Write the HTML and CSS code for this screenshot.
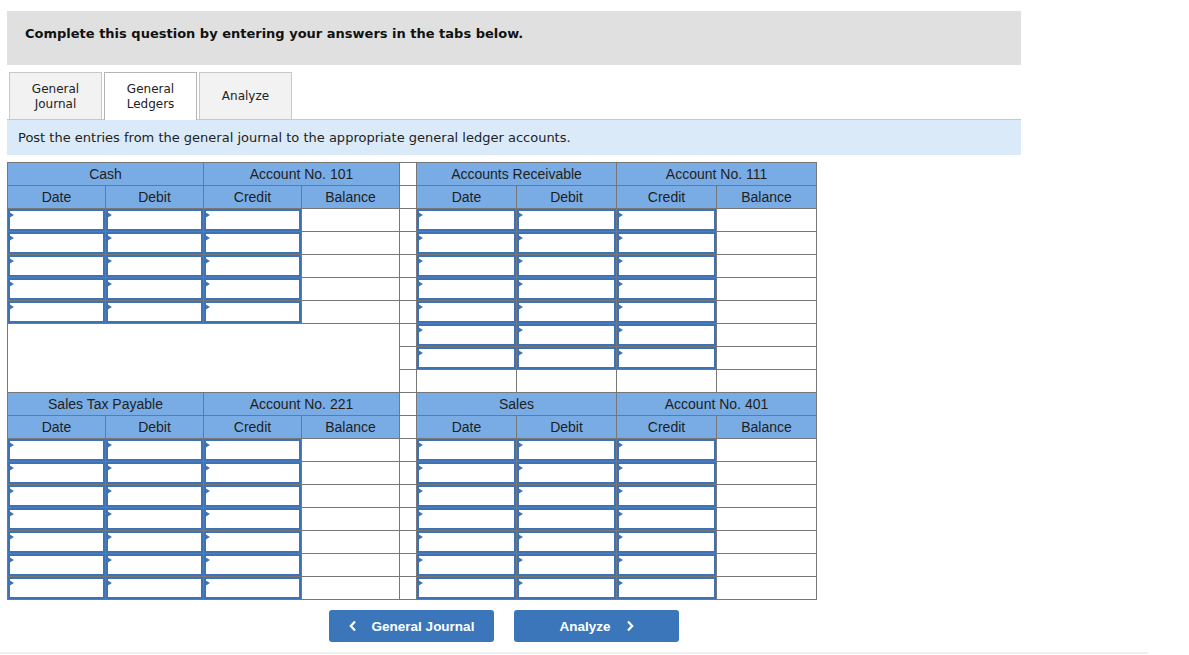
FILE: index.html
```html
<!DOCTYPE html>
<html>
<head>
<meta charset="utf-8">
<link rel="stylesheet" href="styles.css">
</head>
<body>
<div class="page">
  <div class="banner">Complete this question by entering your answers in the tabs below.</div>
  <div class="tabs">
    <div class="tab">General<br>Journal</div>
    <div class="tab active">General<br>Ledgers</div>
    <div class="tab">Analyze</div>
  </div>
  <div class="instr">Post the entries from the general journal to the appropriate general ledger accounts.</div>

  <table class="ledger">
    <colgroup>
      <col class="cl"><col class="cl"><col class="cl"><col class="cl">
      <col class="csp">
      <col class="cr"><col class="cr"><col class="cr"><col class="cr">
    </colgroup>
    <tr>
      <th colspan="2">Cash</th><th colspan="2">Account No. 101</th><td class="sp"></td>
      <th colspan="2">Accounts Receivable</th><th colspan="2">Account No. 111</th>
    </tr>
    <tr>
      <th>Date</th><th>Debit</th><th>Credit</th><th>Balance</th><td class="sp"></td>
      <th>Date</th><th>Debit</th><th>Credit</th><th>Balance</th>
    </tr>
    <tr><td><div class="box"></div></td><td><div class="box"></div></td><td><div class="box"></div></td><td></td><td class="sp"></td><td><div class="box"></div></td><td><div class="box"></div></td><td><div class="box"></div></td><td></td></tr>
    <tr><td><div class="box"></div></td><td><div class="box"></div></td><td><div class="box"></div></td><td></td><td class="sp"></td><td><div class="box"></div></td><td><div class="box"></div></td><td><div class="box"></div></td><td></td></tr>
    <tr><td><div class="box"></div></td><td><div class="box"></div></td><td><div class="box"></div></td><td></td><td class="sp"></td><td><div class="box"></div></td><td><div class="box"></div></td><td><div class="box"></div></td><td></td></tr>
    <tr><td><div class="box"></div></td><td><div class="box"></div></td><td><div class="box"></div></td><td></td><td class="sp"></td><td><div class="box"></div></td><td><div class="box"></div></td><td><div class="box"></div></td><td></td></tr>
    <tr><td><div class="box"></div></td><td><div class="box"></div></td><td><div class="box"></div></td><td></td><td class="sp"></td><td><div class="box"></div></td><td><div class="box"></div></td><td><div class="box"></div></td><td></td></tr>
    <tr><td colspan="4" rowspan="3" class="blank"></td><td class="sp"></td><td><div class="box"></div></td><td><div class="box"></div></td><td><div class="box"></div></td><td></td></tr>
    <tr><td class="sp"></td><td><div class="box"></div></td><td><div class="box"></div></td><td><div class="box"></div></td><td></td></tr>
    <tr><td class="sp"></td><td></td><td></td><td></td><td></td></tr>

    <tr>
      <th colspan="2">Sales Tax Payable</th><th colspan="2">Account No. 221</th><td class="sp"></td>
      <th colspan="2">Sales</th><th colspan="2">Account No. 401</th>
    </tr>
    <tr>
      <th>Date</th><th>Debit</th><th>Credit</th><th>Balance</th><td class="sp"></td>
      <th>Date</th><th>Debit</th><th>Credit</th><th>Balance</th>
    </tr>
    <tr><td><div class="box"></div></td><td><div class="box"></div></td><td><div class="box"></div></td><td></td><td class="sp"></td><td><div class="box"></div></td><td><div class="box"></div></td><td><div class="box"></div></td><td></td></tr>
    <tr><td><div class="box"></div></td><td><div class="box"></div></td><td><div class="box"></div></td><td></td><td class="sp"></td><td><div class="box"></div></td><td><div class="box"></div></td><td><div class="box"></div></td><td></td></tr>
    <tr><td><div class="box"></div></td><td><div class="box"></div></td><td><div class="box"></div></td><td></td><td class="sp"></td><td><div class="box"></div></td><td><div class="box"></div></td><td><div class="box"></div></td><td></td></tr>
    <tr><td><div class="box"></div></td><td><div class="box"></div></td><td><div class="box"></div></td><td></td><td class="sp"></td><td><div class="box"></div></td><td><div class="box"></div></td><td><div class="box"></div></td><td></td></tr>
    <tr><td><div class="box"></div></td><td><div class="box"></div></td><td><div class="box"></div></td><td></td><td class="sp"></td><td><div class="box"></div></td><td><div class="box"></div></td><td><div class="box"></div></td><td></td></tr>
    <tr><td><div class="box"></div></td><td><div class="box"></div></td><td><div class="box"></div></td><td></td><td class="sp"></td><td><div class="box"></div></td><td><div class="box"></div></td><td><div class="box"></div></td><td></td></tr>
    <tr><td><div class="box"></div></td><td><div class="box"></div></td><td><div class="box"></div></td><td></td><td class="sp"></td><td><div class="box"></div></td><td><div class="box"></div></td><td><div class="box"></div></td><td></td></tr>
  </table>

  <div class="nav">
    <button class="btn">
      <svg class="chev" width="8" height="12" viewBox="0 0 8 12"><polyline points="6,1.5 1.8,6 6,10.5" fill="none" stroke="#fff" stroke-width="2.2"/></svg>
      <span>General Journal</span>
    </button>
    <button class="btn">
      <span>Analyze</span>
      <svg class="chev" width="8" height="12" viewBox="0 0 8 12"><polyline points="2,1.5 6.2,6 2,10.5" fill="none" stroke="#fff" stroke-width="2.2"/></svg>
    </button>
  </div>
</div>
<div class="footline"></div>
</body>
</html>
```
FILE: styles.css
```css
html, body {
  margin: 0;
  padding: 0;
  background: #fff;
}

.page {
  padding: 11px 0 0 7px;
  width: 1014px;
}

.banner {
  box-sizing: border-box;
  height: 54px;
  background: #e0e0e0;
  padding: 15px 18px 0;
  font-family: "DejaVu Sans", Verdana, sans-serif;
  font-weight: bold;
  font-size: 13px;
  line-height: 16px;
  color: #111;
}

.tabs {
  margin-top: 7px;
  display: flex;
  gap: 2px;
  padding-left: 2px;
  border-bottom: 1px solid #c8c8c8;
  height: 47px;
}

.tab {
  box-sizing: border-box;
  width: 93px;
  height: 47px;
  padding-top: 1px;
  border: 1px solid #c8c8c8;
  border-bottom: none;
  background: #f2f2f2;
  display: flex;
  align-items: center;
  justify-content: center;
  text-align: center;
  font-family: "DejaVu Sans", Verdana, sans-serif;
  font-size: 12px;
  line-height: 15px;
  color: #222;
}

.tab.active {
  background: #fff;
  border-color: #b4b4b4;
  height: 48px;
  padding-top: 0;
}

.instr {
  box-sizing: border-box;
  height: 35px;
  background: #dbeaf8;
  padding: 1px 0 0 11px;
  font-family: "DejaVu Sans", Verdana, sans-serif;
  font-size: 13px;
  line-height: 34px;
  color: #222;
}

.ledger {
  margin-top: 7px;
  border-collapse: collapse;
  table-layout: fixed;
  width: 809px;
  font-family: "Liberation Sans", Arial, sans-serif;
}

.cl { width: 98px; }
.csp { width: 17px; }
.cr { width: 100px; }

.ledger th,
.ledger td {
  border: 1px solid #777;
  height: 22px;
  padding: 0;
}

.ledger th {
  background: #79ace4;
  color: #1e1e1e;
  font-weight: normal;
  font-size: 14px;
  text-align: center;
  line-height: 22px;
}

.ledger td.sp {
  background: #fff;
}

.ledger td.blank {
  height: auto;
}

.box {
  position: relative;
  box-sizing: border-box;
  height: 22px;
  border: 2px solid #3d73b6;
  background: #fff;
}

.box::before {
  content: "";
  position: absolute;
  left: -1px;
  top: 1px;
  width: 0;
  height: 0;
  border-left: 5px solid #3d73b6;
  border-top: 3px solid transparent;
  border-bottom: 3px solid transparent;
}

.nav {
  margin-top: 10px;
  display: flex;
  gap: 20px;
  padding-left: 322px;
}

.btn {
  width: 165px;
  height: 32px;
  border: none;
  border-radius: 3px;
  background: #3a76b9;
  color: #fff;
  display: flex;
  align-items: center;
  justify-content: center;
  gap: 15px;
  font-family: "Liberation Sans", Arial, sans-serif;
  font-weight: bold;
  font-size: 13.5px;
  padding: 0;
}

.chev {
  display: block;
}

.footline {
  margin-top: 10px;
  width: 1148px;
  height: 2px;
  background: #f0f0f0;
}
```
